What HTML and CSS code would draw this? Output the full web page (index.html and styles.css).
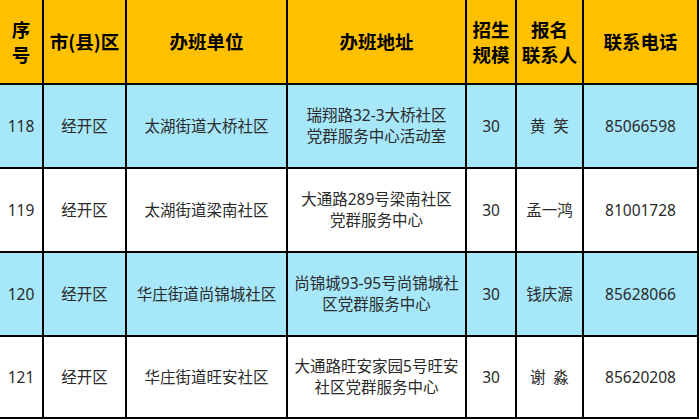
FILE: index.html
```html
<!DOCTYPE html>
<html lang="zh-CN">
<head>
<meta charset="utf-8">
<title>办班信息</title>
<link rel="stylesheet" href="styles.css">
</head>
<body>
<div class="sheet" role="table">
  <div class="cell head">序<br>号</div>
  <div class="cell head">市(县)区</div>
  <div class="cell head">办班单位</div>
  <div class="cell head">办班地址</div>
  <div class="cell head">招生<br>规模</div>
  <div class="cell head">报名<br>联系人</div>
  <div class="cell head">联系电话</div>

  <div class="cell blue">118</div>
  <div class="cell blue">经开区</div>
  <div class="cell blue">太湖街道大桥社区</div>
  <div class="cell blue">瑞翔路32-3大桥社区<br>党群服务中心活动室</div>
  <div class="cell blue">30</div>
  <div class="cell blue">黄&ensp;笑</div>
  <div class="cell blue">85066598</div>

  <div class="cell">119</div>
  <div class="cell">经开区</div>
  <div class="cell">太湖街道梁南社区</div>
  <div class="cell">大通路289号梁南社区<br>党群服务中心</div>
  <div class="cell">30</div>
  <div class="cell">孟一鸿</div>
  <div class="cell">81001728</div>

  <div class="cell blue">120</div>
  <div class="cell blue">经开区</div>
  <div class="cell blue">华庄街道尚锦城社区</div>
  <div class="cell blue">尚锦城93-95号尚锦城社<br>区党群服务中心</div>
  <div class="cell blue">30</div>
  <div class="cell blue">钱庆源</div>
  <div class="cell blue">85628066</div>

  <div class="cell">121</div>
  <div class="cell">经开区</div>
  <div class="cell">华庄街道旺安社区</div>
  <div class="cell">大通路旺安家园5号旺安<br>社区党群服务中心</div>
  <div class="cell">30</div>
  <div class="cell">谢&ensp;淼</div>
  <div class="cell">85620208</div>
</div>
</body>
</html>
```
FILE: styles.css
```css
html, body {
  margin: 0;
  padding: 0;
  background: #ffffff;
}

.sheet {
  display: grid;
  grid-template-columns: 44px 83px 161px 179px 50px 67px 115px;
  grid-template-rows: 85px 84px 84px 84px 82px;
  width: 699px;
  font-family: "Noto Sans", "Noto Sans CJK SC", sans-serif;
}

.cell {
  box-sizing: border-box;
  border-right: 2px solid #000;
  border-bottom: 2px solid #000;
  display: flex;
  align-items: center;
  justify-content: center;
  text-align: center;
  font-size: 15.5px;
  line-height: 21px;
  color: #2a2a2a;
  background: #ffffff;
  white-space: nowrap;
}

.head {
  background: #ffc000;
  color: #000;
  font-weight: bold;
  font-size: 18.5px;
  line-height: 25px;
  font-family: "Noto Sans CJK SC", sans-serif;
}

.blue {
  background: #a6e7fa;
}
```
